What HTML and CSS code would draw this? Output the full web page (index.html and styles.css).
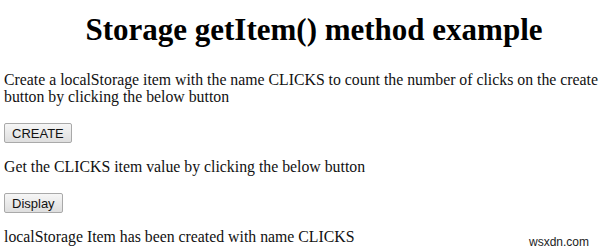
FILE: index.html
```html
<!DOCTYPE html>
<html>
<head>
<meta charset="utf-8">
<link rel="stylesheet" href="styles.css">
</head>
<body class="page">
<h1 class="title">Storage getItem() method example</h1>
<p class="text">Create a localStorage item with the name CLICKS to count the number of clicks on the create button by clicking the below button</p>
<button class="btn">CREATE</button>
<p class="text">Get the CLICKS item value by clicking the below button</p>
<button class="btn">Display</button>
<p class="text">localStorage Item has been created with name CLICKS</p>
<div class="mark">wsxdn.com</div>
</body>
</html>
```
FILE: styles.css
```css
html, body { margin: 0; padding: 0; background: #fff; }
.page {
  margin: 0;
  padding: 0 0 0 4px;
  font-family: "Liberation Serif", "Times New Roman", serif;
  font-size: 15.8px;
  color: #111;
  position: relative;
  height: 252px;
  overflow: hidden;
}
.title {
  font-size: 31px;
  font-weight: bold;
  text-align: center;
  margin: 13px 0 24px;
  padding-left: 24px;
  line-height: 34px;
  color: #000;
}
.text {
  margin: 0;
  line-height: 17px;
}
.btn {
  font-family: Arial, "Liberation Sans", sans-serif;
  font-size: 13px;
  color: #111;
  height: 20px;
  padding: 0 7px;
  border: 1px solid #a9a9a9;
  border-radius: 2px;
  background: linear-gradient(#f6f6f6, #dedede);
  margin: 18px 0 15px;
  display: block;
}
.mark {
  position: absolute;
  right: 11px;
  bottom: 3px;
  font-family: "Liberation Sans", Arial, sans-serif;
  font-size: 12px;
  color: #222;
  background: rgba(255,255,255,0.8);
}
```
